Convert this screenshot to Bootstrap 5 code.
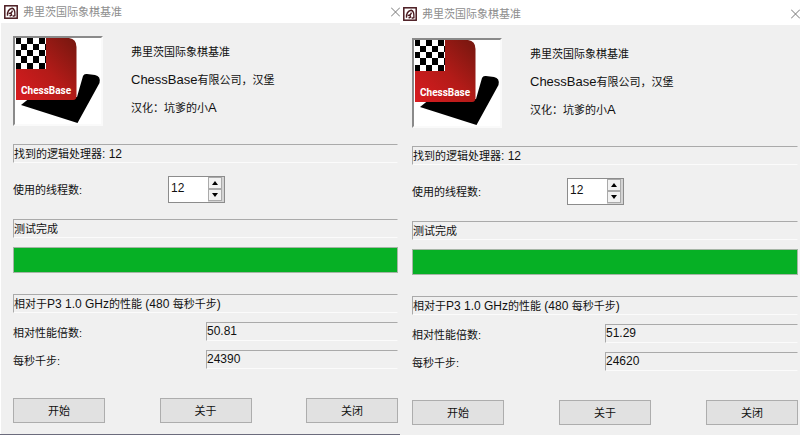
<!DOCTYPE html>
<html lang="zh-CN">
<head>
<meta charset="utf-8">
<meta name="viewport" content="width=device-width, initial-scale=1">
<title>弗里茨国际象棋基准</title>
<link href="https://cdn.jsdelivr.net/npm/bootstrap@5.3.0/dist/css/bootstrap.min.css" rel="stylesheet">
<style>
body { background: #f0f0f0; color: #111; font-family: "Liberation Sans", "Noto Sans CJK SC", sans-serif; font-size: 11px; line-height: 16px; }
.dialog { min-height: 100vh; overflow: hidden; }
.dialog-first { border-bottom: 1px solid #6b6b7c; }
.dialog-first .titlebar { height: 23px; padding-left: 4px; }
.dialog-second .titlebar { height: 25px; padding-left: 3px; padding-top: 2px; }
.dialog-first .content-area { padding: 13px 2px 11px 12px; border-left: 1px solid #fff; }
.dialog-second .content-area { padding: 13px 2px 10px 12px; }
.titlebar { background: #fff; color: #8e8e8e; }
.titlebar h1 { font-size: 11px; line-height: 18px; padding-left: 5px; }
.appicon { width: 14px; height: 14px; }
.closer { width: 9px; height: 12px; overflow: hidden; color: #777; }
.logo-frame { width: 90px; height: 90px; background: #fff; border: 2px solid; border-color: #8a8a8a #fafafa #fafafa #8a8a8a; }
.about-text { padding-top: 2px; padding-left: 28px; line-height: 28px; }
.latin { font-size: 12px; }
.latin-name { font-size: 13px; }
.sunken { border: 1px solid; border-color: #aaa #f0f0f0 #fbfbfb #aaa; height: 19px; line-height: 18px; }
.found-row { margin-top: 18px; }
.thread-row { margin-top: 13px; height: 27px; }
.thread-row label { width: 155px; }
.spinner { width: 57px; height: 27px; border: 1px solid #8c8c8c; background: #d4d4d4; }
.spinner input { width: 39px; height: 100%; font-size: 12px; padding: 0 0 4px 2px; color: #111; background: #fff; outline-offset: -1px; }
.spinner button { width: 14px; height: 12px; background: #f2f2f2; border: 1px solid #aaa; }
.status-row { margin-top: 16px; }
.bar { height: 26px; margin-top: 9px; background: #e6e6e6; border: 1px solid #a5b5a5; }
.bar .progress-bar { background: #06b025; }
.perf-row { margin-top: 21px; }
.result-row { margin-top: 9px; }
.result-row label { width: 193px; padding-top: 3px; }
.result-row output { font-size: 12px; line-height: 16px; }
.actions { margin-top: 29px; }
.push { width: 92px; height: 25px; background: #e1e1e1; border: 1px solid #adadad; color: #111; }
</style>
<script src="https://cdn.jsdelivr.net/npm/bootstrap@5.3.0/dist/js/bootstrap.bundle.min.js"></script>
</head>
<body>
<svg class="d-none" xmlns="http://www.w3.org/2000/svg">
  <symbol id="knight" viewBox="0 0 14 14">
    <rect x=".8" y=".8" width="12.4" height="12.4" fill="#fff" stroke="#4a1a20" stroke-width="1.5"/>
    <path d="M3.5 10.8C3.2 7 5 4 8.2 3.2C10.7 3.8 11.2 6 10.9 10.7L8.7 11.2M4.8 8.7L7.4 7.7L8.5 5.6M7 8.3L7.6 10.2L5.6 11" fill="none" stroke="#4a1a20" stroke-width="1.4"/>
  </symbol>
  <symbol id="logo" viewBox="0 0 86 86">
    <path d="M6 67L16 59H62L68 38Q69 35.500 72 36L80 37Q86 38 84.500 45L62.500 85Z" fill="#000"/>
    <path d="M1 0H54Q61.500 1 61.500 9V58Q61.500 62 58 62H1Z" fill="url(#redfade)"/>
    <rect x="1" y="0" width="30" height="31" fill="#fff"/>
    <path d="M1 0h5v6h-5zM12 0h6v6h-6zM24 0h6v6h-6zM6 6h6v6h-6zM18 6h6v6h-6zM1 12h5v6h-5zM12 12h6v6h-6zM24 12h6v6h-6zM6 18h6v7h-6zM18 18h6v7h-6zM1 25h5v6h-5zM12 25h6v6h-6zM24 25h6v6h-6zM30 6h1v6h-1zM30 18h1v7h-1z" fill="#000"/>
    <text x="6" y="56" font-family="Roboto, sans-serif" font-weight="700" font-size="10" fill="#fff">ChessBase</text>
  </symbol>
  <symbol id="cross" viewBox="0 0 9 12"><path d="M0 1.500L9 10.500M9 1.500L0 10.500" fill="none" stroke="currentColor"/></symbol>
</svg>
<svg width="0" height="0" class="position-absolute" aria-hidden="true"><defs><linearGradient id="redfade" x1="0" y1="1" x2="1" y2="0"><stop offset="0" stop-color="#d91c20"/><stop offset=".5" stop-color="#b31b18"/><stop offset="1" stop-color="#74170f"/></linearGradient></defs></svg>
<main class="container-fluid p-0">
 <div class="row g-0">
  <section class="col-6 dialog dialog-first d-flex flex-column">
    <header class="titlebar d-flex align-items-center">
      <svg class="appicon flex-shrink-0" aria-hidden="true"><use href="#knight"/></svg>
      <h1 class="m-0 fw-normal flex-grow-1">弗里茨国际象棋基准</h1>
      <button class="closer btn p-0 border-0 rounded-0 d-flex" type="button" aria-label="关闭窗口"><svg width="9" height="12"><use href="#cross"/></svg></button>
    </header>
    <div class="content-area flex-grow-1">
      <div class="d-flex">
        <div class="logo-frame"><svg class="d-block w-100 h-100" role="img" aria-label="ChessBase"><use href="#logo"/></svg></div>
        <div class="about-text"><div>弗里茨国际象棋基准</div><div><span class="latin-name">ChessBase</span>有限公司，汉堡</div><div>汉化：坑爹的小<span class="latin-name">A</span></div></div>
      </div>
      <div class="sunken found-row">找到的逻辑处理器<span class="latin">: 12</span></div>
      <div class="thread-row d-flex align-items-center">
        <label for="threads1">使用的线程数:</label>
        <div class="spinner d-flex">
          <input class="border-0" id="threads1" type="text" value="12">
          <div class="d-flex flex-column"><button class="p-0 d-flex align-items-center justify-content-center" type="button" aria-label="增加"><svg width="6" height="4"><path d="M0 4L3 0L6 4Z"/></svg></button><button class="p-0 d-flex align-items-center justify-content-center" type="button" aria-label="减少"><svg width="6" height="4"><path d="M0 0L3 4L6 0Z"/></svg></button></div>
        </div>
      </div>
      <div class="sunken status-row">测试完成</div>
      <div class="progress bar rounded-0" role="progressbar" aria-label="测试进度" aria-valuenow="100" aria-valuemin="0" aria-valuemax="100"><div class="progress-bar w-100"></div></div>
      <div class="sunken perf-row">相对于<span class="latin">P3 1.0 GHz</span>的性能<span class="latin"> (480 </span>每秒千步<span class="latin">)</span></div>
      <div class="result-row d-flex"><label for="ratio1">相对性能倍数:</label><output class="sunken flex-grow-1" id="ratio1">50.81</output></div>
      <div class="result-row d-flex"><label for="knps1">每秒千步:</label><output class="sunken flex-grow-1" id="knps1">24390</output></div>
      <div class="actions d-flex justify-content-between"><button class="push p-0" type="button">开始</button><button class="push p-0" type="button">关于</button><button class="push p-0" type="button">关闭</button></div>
    </div>
  </section>
  <section class="col-6 dialog dialog-second d-flex flex-column">
    <header class="titlebar d-flex align-items-center">
      <svg class="appicon flex-shrink-0" aria-hidden="true"><use href="#knight"/></svg>
      <h1 class="m-0 fw-normal flex-grow-1">弗里茨国际象棋基准</h1>
      <button class="closer btn p-0 border-0 rounded-0 d-flex" type="button" aria-label="关闭窗口"><svg width="9" height="12"><use href="#cross"/></svg></button>
    </header>
    <div class="content-area flex-grow-1">
      <div class="d-flex">
        <div class="logo-frame"><svg class="d-block w-100 h-100" role="img" aria-label="ChessBase"><use href="#logo"/></svg></div>
        <div class="about-text"><div>弗里茨国际象棋基准</div><div><span class="latin-name">ChessBase</span>有限公司，汉堡</div><div>汉化：坑爹的小<span class="latin-name">A</span></div></div>
      </div>
      <div class="sunken found-row">找到的逻辑处理器<span class="latin">: 12</span></div>
      <div class="thread-row d-flex align-items-center">
        <label for="threads2">使用的线程数:</label>
        <div class="spinner d-flex">
          <input class="border-0" id="threads2" type="text" value="12">
          <div class="d-flex flex-column"><button class="p-0 d-flex align-items-center justify-content-center" type="button" aria-label="增加"><svg width="6" height="4"><path d="M0 4L3 0L6 4Z"/></svg></button><button class="p-0 d-flex align-items-center justify-content-center" type="button" aria-label="减少"><svg width="6" height="4"><path d="M0 0L3 4L6 0Z"/></svg></button></div>
        </div>
      </div>
      <div class="sunken status-row">测试完成</div>
      <div class="progress bar rounded-0" role="progressbar" aria-label="测试进度" aria-valuenow="100" aria-valuemin="0" aria-valuemax="100"><div class="progress-bar w-100"></div></div>
      <div class="sunken perf-row">相对于<span class="latin">P3 1.0 GHz</span>的性能<span class="latin"> (480 </span>每秒千步<span class="latin">)</span></div>
      <div class="result-row d-flex"><label for="ratio2">相对性能倍数:</label><output class="sunken flex-grow-1" id="ratio2">51.29</output></div>
      <div class="result-row d-flex"><label for="knps2">每秒千步:</label><output class="sunken flex-grow-1" id="knps2">24620</output></div>
      <div class="actions d-flex justify-content-between"><button class="push p-0" type="button">开始</button><button class="push p-0" type="button">关于</button><button class="push p-0" type="button">关闭</button></div>
    </div>
  </section>
 </div>
</main>
</body>
</html>
